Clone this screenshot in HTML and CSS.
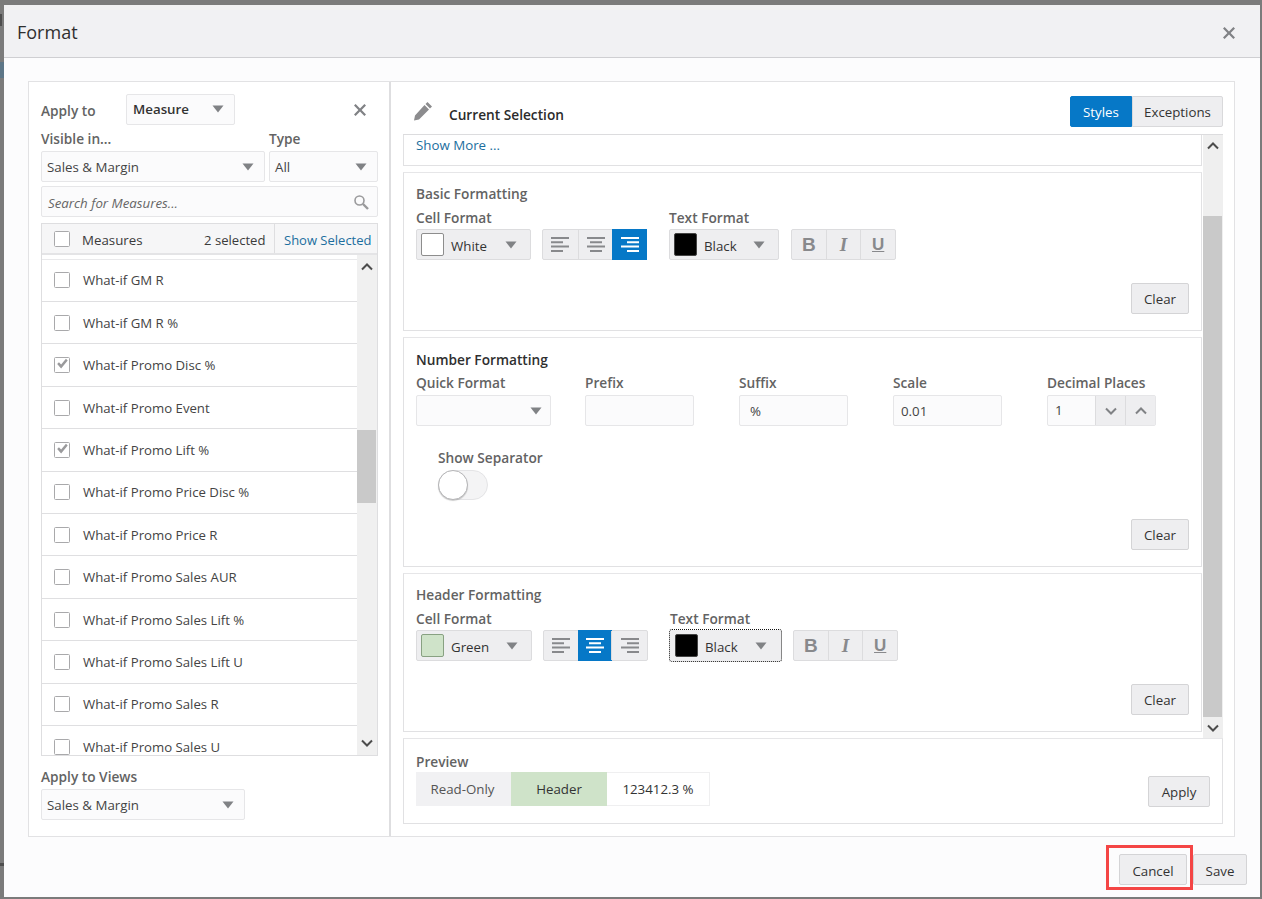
FILE: index.html
```html
<!DOCTYPE html>
<html lang="en">
<head>
<meta charset="utf-8">
<title>Format</title>
<link rel="stylesheet" href="styles.css">
</head>
<body>
<svg class="defs" width="0" height="0" aria-hidden="true">
  <symbol id="caret" viewBox="0 0 12 8"><path d="M0.5 0.5h11L6 7.5z"/></symbol>
  <symbol id="close" viewBox="0 0 12 12"><path d="M1.6 0L6 4.4 10.4 0 12 1.6 7.6 6 12 10.4 10.4 12 6 7.6 1.6 12 0 10.4 4.4 6 0 1.6z"/></symbol>
  <symbol id="up" viewBox="0 0 12 8"><path d="M1 6.5L6 1.5l5 5" fill="none" stroke="currentColor" stroke-width="2"/></symbol>
  <symbol id="down" viewBox="0 0 12 8"><path d="M1 1.5l5 5 5-5" fill="none" stroke="currentColor" stroke-width="2"/></symbol>
  <symbol id="left" viewBox="0 0 18 15"><path d="M0 0h18v2H0zM0 4.300h12v2H0zM0 8.600h18v2H0zM0 13h12v2H0z"/></symbol>
  <symbol id="center" viewBox="0 0 18 15"><path d="M0 0h18v2H0zM3 4.300h12v2H3zM0 8.600h18v2H0zM3 13h12v2H3z"/></symbol>
  <symbol id="right" viewBox="0 0 18 15"><path d="M0 0h18v2H0zM6 4.300h12v2H6zM0 8.600h18v2H0zM6 13h12v2H6z"/></symbol>
  <symbol id="check" viewBox="0 0 16 16"><path d="M2.500 8l2-2 2.500 2.500L12.500 2l2 2-7.500 9z"/></symbol>
  <symbol id="box" viewBox="0 0 16 16"><rect x="0.500" y="0.500" width="15" height="15" rx="1" fill="none" stroke="currentColor"/></symbol>
</svg>

<span class="backdrop-mark mark-a"></span>
<span class="backdrop-mark mark-b"></span>
<span class="backdrop-mark mark-c"></span>

<div class="dialog">
  <header class="dialog-head">
    <h1 class="dialog-title">Format</h1>
    <svg class="dialog-close"><use href="#close"/></svg>
  </header>

  <div class="dialog-body">
    <div class="frame">
      <aside class="left-pane">
        <div class="apply-row">
          <span class="label apply-label">Apply to</span>
          <div class="select select-measure"><b>Measure</b><svg class="caret"><use href="#caret"/></svg></div>
          <svg class="pane-close"><use href="#close"/></svg>
        </div>
        <div class="filter-row">
          <div class="field-visible">
            <span class="label">Visible in...</span>
            <div class="select"><span>Sales &amp; Margin</span><svg class="caret"><use href="#caret"/></svg></div>
          </div>
          <div class="field-type">
            <span class="label">Type</span>
            <div class="select"><span>All</span><svg class="caret"><use href="#caret"/></svg></div>
          </div>
        </div>
        <div class="search">
          <span>Search for Measures...</span>
          <svg class="search-icon" viewBox="0 0 16 16"><circle cx="6.500" cy="6.500" r="4.500" fill="none" stroke="currentColor" stroke-width="1.600"/><path d="M10 10l5 5" stroke="currentColor" stroke-width="2.400"/></svg>
        </div>
        <div class="measure-table">
          <div class="measure-head">
            <svg class="cb"><use href="#box"/></svg>
            <span class="measure-title">Measures</span>
            <span class="measure-count">2 selected</span>
            <a class="show-selected">Show Selected</a>
          </div>
          <div class="measure-body">
            <ul class="measure-list">
              <li class="measure-item"><svg class="cb"><use href="#box"/></svg>What-if GM R</li>
              <li class="measure-item"><svg class="cb"><use href="#box"/></svg>What-if GM R %</li>
              <li class="measure-item"><span class="cb-wrap"><svg class="cb"><use href="#box"/></svg><svg class="tick"><use href="#check"/></svg></span>What-if Promo Disc %</li>
              <li class="measure-item"><svg class="cb"><use href="#box"/></svg>What-if Promo Event</li>
              <li class="measure-item"><span class="cb-wrap"><svg class="cb"><use href="#box"/></svg><svg class="tick"><use href="#check"/></svg></span>What-if Promo Lift %</li>
              <li class="measure-item"><svg class="cb"><use href="#box"/></svg>What-if Promo Price Disc %</li>
              <li class="measure-item"><svg class="cb"><use href="#box"/></svg>What-if Promo Price R</li>
              <li class="measure-item"><svg class="cb"><use href="#box"/></svg>What-if Promo Sales AUR</li>
              <li class="measure-item"><svg class="cb"><use href="#box"/></svg>What-if Promo Sales Lift %</li>
              <li class="measure-item"><svg class="cb"><use href="#box"/></svg>What-if Promo Sales Lift U</li>
              <li class="measure-item"><svg class="cb"><use href="#box"/></svg>What-if Promo Sales R</li>
              <li class="measure-item"><svg class="cb"><use href="#box"/></svg>What-if Promo Sales U</li>
            </ul>
            <div class="scrollbar scrollbar-list">
              <svg class="arrow"><use href="#up"/></svg>
              <div class="thumb thumb-list"></div>
              <svg class="arrow arrow-end"><use href="#down"/></svg>
            </div>
          </div>
        </div>
        <span class="label views-label">Apply to Views</span>
        <div class="select select-views"><span>Sales &amp; Margin</span><svg class="caret"><use href="#caret"/></svg></div>
      </aside>

      <section class="right-pane">
        <div class="selection-head">
          <svg class="pencil" viewBox="0 0 20 20"><path d="M14.500 1l4.500 4.500-2 2L12.500 3zM11.500 4l4.500 4.500L6 18.500 1 19.500l1-5z"/></svg>
          <strong class="selection-title">Current Selection</strong>
          <div class="tabs">
            <span class="tab tab-on">Styles</span>
            <span class="tab">Exceptions</span>
          </div>
        </div>

        <div class="style-scroll">
          <div class="style-sections">
            <div class="box box-more"><a class="show-more">Show More ...</a></div>

            <div class="box box-basic">
              <div class="label box-title">Basic Formatting</div>
              <div class="format-labels"><span class="label">Cell Format</span><span class="label">Text Format</span></div>
              <div class="format-row">
                <div class="color-select color-cell"><i class="swatch swatch-white"></i><span>White</span><svg class="caret"><use href="#caret"/></svg></div>
                <div class="btn-group align-group">
                  <span class="seg"><svg class="align"><use href="#left"/></svg></span>
                  <span class="seg"><svg class="align"><use href="#center"/></svg></span>
                  <span class="seg seg-on"><svg class="align"><use href="#right"/></svg></span>
                </div>
                <div class="color-select color-text"><i class="swatch swatch-black"></i><span>Black</span><svg class="caret"><use href="#caret"/></svg></div>
                <div class="btn-group biu">
                  <span class="seg seg-b">B</span><span class="seg seg-i">I</span><span class="seg seg-u">U</span>
                </div>
              </div>
              <button class="btn btn-clear">Clear</button>
            </div>

            <div class="box box-number">
              <div class="label box-title title-dark">Number Formatting</div>
              <div class="number-grid">
                <div class="nf nf-quick"><span class="label">Quick Format</span><div class="select"><span></span><svg class="caret"><use href="#caret"/></svg></div></div>
                <div class="nf nf-prefix"><span class="label">Prefix</span><div class="input"></div></div>
                <div class="nf nf-suffix"><span class="label">Suffix</span><div class="input">%</div></div>
                <div class="nf nf-scale"><span class="label">Scale</span><div class="input">0.01</div></div>
                <div class="nf nf-decimal"><span class="label">Decimal Places</span>
                  <div class="spinner"><span class="spin-value">1</span><span class="spin-btn"><svg class="spin-arrow"><use href="#down"/></svg></span><span class="spin-btn"><svg class="spin-arrow"><use href="#up"/></svg></span></div>
                </div>
              </div>
              <div class="separator">
                <span class="label">Show Separator</span>
                <div class="switch"><i class="knob"></i></div>
              </div>
              <button class="btn btn-clear">Clear</button>
            </div>

            <div class="box box-header">
              <div class="label box-title">Header Formatting</div>
              <div class="format-labels header-labels"><span class="label">Cell Format</span><span class="label">Text Format</span></div>
              <div class="format-row header-row">
                <div class="color-select color-cell"><i class="swatch swatch-green"></i><span>Green</span><svg class="caret"><use href="#caret"/></svg></div>
                <div class="btn-group align-group">
                  <span class="seg"><svg class="align"><use href="#left"/></svg></span>
                  <span class="seg seg-on"><svg class="align"><use href="#center"/></svg></span>
                  <span class="seg"><svg class="align"><use href="#right"/></svg></span>
                </div>
                <div class="color-select color-text color-focus"><i class="swatch swatch-black"></i><span>Black</span><svg class="caret"><use href="#caret"/></svg></div>
                <div class="btn-group biu">
                  <span class="seg seg-b">B</span><span class="seg seg-i">I</span><span class="seg seg-u">U</span>
                </div>
              </div>
              <button class="btn btn-clear">Clear</button>
            </div>
          </div>
          <div class="scrollbar scrollbar-styles">
            <svg class="arrow"><use href="#up"/></svg>
            <div class="thumb thumb-styles"></div>
            <svg class="arrow arrow-end"><use href="#down"/></svg>
          </div>
        </div>

        <div class="box box-preview">
          <div class="preview-main">
            <div class="label">Preview</div>
            <div class="preview-cells">
              <span class="cell cell-ro">Read-Only</span>
              <span class="cell cell-head">Header</span>
              <span class="cell cell-val">123412.3 %</span>
            </div>
          </div>
          <button class="btn btn-apply">Apply</button>
        </div>
      </section>
    </div>
  </div>

  <footer class="dialog-foot">
    <button class="btn btn-cancel">Cancel</button>
    <button class="btn btn-save">Save</button>
    <span class="callout"></span>
  </footer>
</div>
</body>
</html>
```

FILE: styles.css
```css
* { box-sizing: border-box; }
html, body { margin: 0; height: 100%; }
body {
  position: relative;
  width: 1262px;
  height: 899px;
  overflow: hidden;
  padding: 5px 2px 2px 4px;
  background: #7b7b7b;
  font-family: "Open Sans", "Noto Sans", "Liberation Sans", sans-serif;
  font-size: 13.3px;
  color: #3b3b3b;
}
.defs { position: absolute; }
.backdrop-mark { position: absolute; background: #4e4e4e; }
.mark-a { left: 0; top: 14px; width: 2px; height: 12px; }
.mark-b { left: 0; top: 62px; width: 4px; height: 16px; background: #5d7687; }
.mark-c { left: 0; top: 863px; width: 4px; height: 3px; }

.dialog { width: 1256px; height: 892px; display: flex; flex-direction: column; background: #fcfcfd; }
.dialog-head {
  height: 53px; flex: none; display: flex; align-items: center; justify-content: space-between;
  padding: 2px 25px 0 13px; background: #f1f1f3; border-bottom: 1px solid #cfcfd2;
}
.dialog-title { margin: 0; font-size: 18px; font-weight: 400; color: #2f2f2f; }
.dialog-close { width: 12px; height: 12px; fill: #808285; margin-top: 2px; }

.dialog-body { height: 778px; flex: none; padding: 23px 24px 0; }
.frame { height: 756px; width: 1207px; display: flex; border: 1px solid #e2e2e4; background: #fff; }

.label { font-weight: 600; color: #636363; font-size: 13.7px; line-height: 16px; display: block; white-space: nowrap; }

.left-pane { width: 362px; flex: none; padding: 12px 11px 0 12px; border-right: 2px solid #dedee0; }
.apply-row { height: 32px; display: flex; align-items: center; position: relative; }
.apply-label { width: 85px; padding-top: 1px; }
.select {
  display: flex; align-items: center; justify-content: space-between;
  height: 31px; padding: 0 10px 0 5px;
  background: #fbfbfc; border: 1px solid #e6e6e8; border-radius: 2px; color: #444;
}
.select-measure { width: 109px; color: #333; padding-left: 6px; margin-bottom: 2px; }
.select-measure b { font-weight: 600; }
.caret { width: 12px; height: 8px; fill: #808285; flex: none; }
.pane-close { width: 12px; height: 12px; fill: #808285; margin-left: 119px; }

.filter-row { display: flex; gap: 4px; margin-top: 5px; }
.field-visible { width: 224px; flex: none; }
.field-type { width: 109px; flex: none; }
.filter-row .label { height: 20px; }
.search {
  height: 31px; margin-top: 4px; padding: 2px 8px 0 6px;
  display: flex; align-items: center; justify-content: space-between;
  background: #fbfbfc; border: 1px solid #e6e6e8; border-radius: 2px;
  font-style: italic; color: #666;
}
.search-icon { width: 16px; height: 16px; color: #9a9a9c; margin-top: -2px; }

.measure-table { margin-top: 6px; border: 1px solid #dedee0; height: 533px; display: flex; flex-direction: column; }
.measure-head { height: 31px; flex: none; display: flex; align-items: center; padding-left: 12px; background: #f6f6f7; border-bottom: 2px solid #e4e4e6; }
.cb { width: 16px; height: 16px; color: #a9a9ab; flex: none; display: block; background: #fff; }
.measure-title { margin-left: 12px; width: 122px; padding-top: 2px; }
.measure-count { width: 70px; white-space: nowrap; padding-top: 2px; font-size: 13.1px; }
.show-selected { padding: 2px 0 0 9px; height: 100%; display: flex; align-items: center; color: #1c6e9e; border-left: 1px solid #dedee0; white-space: nowrap; font-size: 13px; }
.measure-body { flex: 1; display: flex; min-height: 0; overflow: hidden; }
.measure-list { flex: 1; margin: 3.7px 0 0; padding: 0; list-style: none; overflow: hidden; border-top: 1px solid #e9e9eb; }
.measure-item { height: 42.4px; display: flex; align-items: center; gap: 13px; padding-left: 12px; border-bottom: 1px solid #dfdfe1; color: #444; flex: none; font-size: 13.2px; }
.cb-wrap { position: relative; display: block; width: 16px; height: 16px; }
.tick { position: absolute; left: 1px; top: 0; width: 14px; height: 14px; fill: #9a9a9c; }

.scrollbar { width: 20px; flex: none; background: #f0f0f0; display: flex; flex-direction: column; align-items: center; color: #4c4c4c; }
.arrow { width: 12px; height: 8px; flex: none; margin-top: 8px; }
.arrow-end { margin-top: auto; margin-bottom: 8px; }
.thumb { width: 19px; background: #c9c9c9; flex: none; align-self: flex-start; }
.thumb-list { height: 73px; margin-top: 159px; }

.views-label { margin-top: 13px; height: 20px; }
.select-views { width: 204px; }

.right-pane { width: 843px; flex: none; padding: 0 11px 0 12px; display: flex; flex-direction: column; }
.selection-head { height: 52px; flex: none; display: flex; align-items: flex-start; position: relative; }
.pencil { width: 20px; height: 20px; fill: #8c8c8e; margin: 19px 0 0 10px; flex: none; }
.selection-title { font-weight: 600; font-size: 13.7px; margin: 24px 0 0 16px; color: #2b2b2b; line-height: 18px; }
.tabs { margin-left: auto; margin-top: 14px; display: flex; height: 31px; }
.tab { padding: 0; width: 91px; display: flex; align-items: center; justify-content: center; background: #eeeef0; color: #333; border: 1px solid #d9d9db; border-radius: 0 2px 2px 0; }
.tab-on { width: 62px; background: #0678c7; border-color: #0678c7; color: #fff; border-radius: 2px 0 0 2px; }

.style-scroll { height: 604px; flex: none; display: flex; border-top: 1px solid #dcdcde; }
.style-sections { width: 799px; flex: none; display: flex; flex-direction: column; gap: 6px; }
.scrollbar-styles { margin-left: 1px; height: 603px; background: #efefef; }
.scrollbar-styles .arrow { margin-top: 7px; }
.scrollbar-styles .arrow-end { margin-top: auto; margin-bottom: 6px; }
.thumb-styles { height: 501px; margin-top: 66px; }
.box { border: 1px solid #e1e1e3; border-top-color: #e6e6e8; background: #fff; position: relative; flex: none; }
.box-more { height: 31px; border-top: 0; padding: 0 12px; }
.show-more { color: #1c6e9e; line-height: 20px; display: block; }
.box-basic { height: 159px; padding: 12px 12px 0; }
.box-number { height: 230px; padding: 13px 12px 0; }
.box-header { height: 159px; padding: 12px 12px 0; }
.box-title { line-height: 18px; }
.title-dark { color: #2f2f2f; }
.format-labels { display: flex; margin-top: 7px; }
.format-labels .label { width: 253px; height: 19px; }
.format-row { display: flex; align-items: center; height: 31px; }
.color-select {
  display: flex; align-items: center; height: 31px; padding: 0 13px 0 4px;
  background: #eeeef0; border: 1px solid #dcdcde; border-radius: 2px; color: #333;
}
.color-select span { margin-left: 7px; flex: 1; padding-top: 2px; }
.color-cell { width: 115px; }
.color-text { width: 110px; margin-left: 22px; }
.swatch { width: 23px; height: 23px; border-radius: 2px; display: block; flex: none; border: 1px solid #8d8d8d; }
.swatch-white { background: #fff; }
.swatch-black { background: #000; border-color: #444; }
.swatch-green { background: #cfe3c9; border-color: #88a182; }
.btn-group { display: flex; height: 31px; background: #eeeef0; border: 1px solid #dcdcde; border-radius: 2px; }
.align-group { width: 105px; margin-left: 11px; }
.seg { flex: 1; display: flex; align-items: center; justify-content: center; border-left: 1px solid #dcdcde; color: #88898c; }
.seg:first-child { border-left: 0; }
.seg-on { background: #0678c7; color: #fff; margin: -1px; border: 0; }
.align { width: 18px; height: 15px; fill: currentColor; }
.biu { width: 105px; margin-left: 12px; font-family: "Liberation Sans", sans-serif; font-size: 19px; font-weight: 700; }
.seg-i { font-style: italic; font-family: "Liberation Serif", serif; }
.seg-u { text-decoration: underline; font-size: 17px; }
.header-row .color-cell { width: 116px; }
.header-row .align-group { margin-left: 11px; }
.header-row .color-text { width: 111px; }
.header-labels .label:first-child { width: 254px; }
.color-focus { outline: 1px dotted #111; outline-offset: 0; border-color: transparent; }

.btn {
  font: inherit; color: #333; background: #eeeef0; border: 1px solid #d4d4d6; border-radius: 2px;
  height: 31px; padding: 0; cursor: default;
}
.btn-clear { position: absolute; right: 12px; bottom: 16px; width: 58px; }

.number-grid { display: flex; margin-top: 6px; }
.nf .label { height: 20px; }
.nf .select { padding-right: 8px; }
.nf-quick { width: 169px; }
.nf-quick .select { width: 135px; height: 31px; }
.nf-prefix { width: 154px; }
.nf-suffix, .nf-scale { width: 154px; }
.nf-decimal { width: 109px; }
.input { width: 109px; height: 31px; display: flex; align-items: center; padding: 0 10px 0 7px; background: #fbfbfc; border: 1px solid #e6e6e8; border-radius: 2px; color: #444; }
.nf-suffix .input { padding-left: 10px; }
.spinner { display: flex; height: 31px; width: 109px; border: 1px solid #e6e6e8; border-radius: 2px; background: #fbfbfc; }
.spin-value { width: 47px; padding-left: 7px; line-height: 29px; color: #444; }
.spin-btn { flex: 1; background: #eeeef0; border-left: 1px solid #dcdcde; display: flex; align-items: center; justify-content: center; color: #808285; }
.spin-arrow { width: 12px; height: 8px; }
.separator { margin: 24px 0 0 22px; }
.separator .label { height: 20px; }
.switch { width: 50px; height: 30px; border-radius: 15px; background: #f4f4f5; border: 1px solid #e4e4e6; position: relative; }
.knob { position: absolute; left: -1px; top: -1px; width: 30px; height: 30px; border-radius: 50%; background: #fff; border: 1px solid #b5b5b7; box-shadow: 0 1px 1px rgba(0,0,0,.2); }

.box-preview { width: 820px; height: 86px; flex: none; padding: 14px 12px 0; display: flex; justify-content: space-between; }
.preview-main .label { line-height: 17px; }
.preview-cells { display: flex; height: 34px; margin-top: 2px; border: 1px solid #efeff0; width: 294px; }
.cell { display: flex; align-items: center; justify-content: center; }
.cell-ro { width: 95px; background: #f1f1f3; color: #555; margin: -1px 0 -1px -1px; padding-right: 2px; }
.cell-head { width: 96px; background: #cfe3c9; color: #333; margin: -1px 0; }
.cell-val { flex: 1; background: #fff; color: #333; }
.btn-apply { width: 62px; margin-top: 23px; }

.dialog-foot { flex: 1; position: relative; display: flex; justify-content: flex-end; align-items: flex-start; padding: 18px 13px 0 0; }
.btn-cancel { width: 68px; margin-right: 6px; padding-top: 2px; }
.btn-save { width: 54px; padding-top: 2px; }
.callout { position: absolute; left: 1102px; top: 9px; width: 87px; height: 45px; border: 3px solid #f44545; }
```
